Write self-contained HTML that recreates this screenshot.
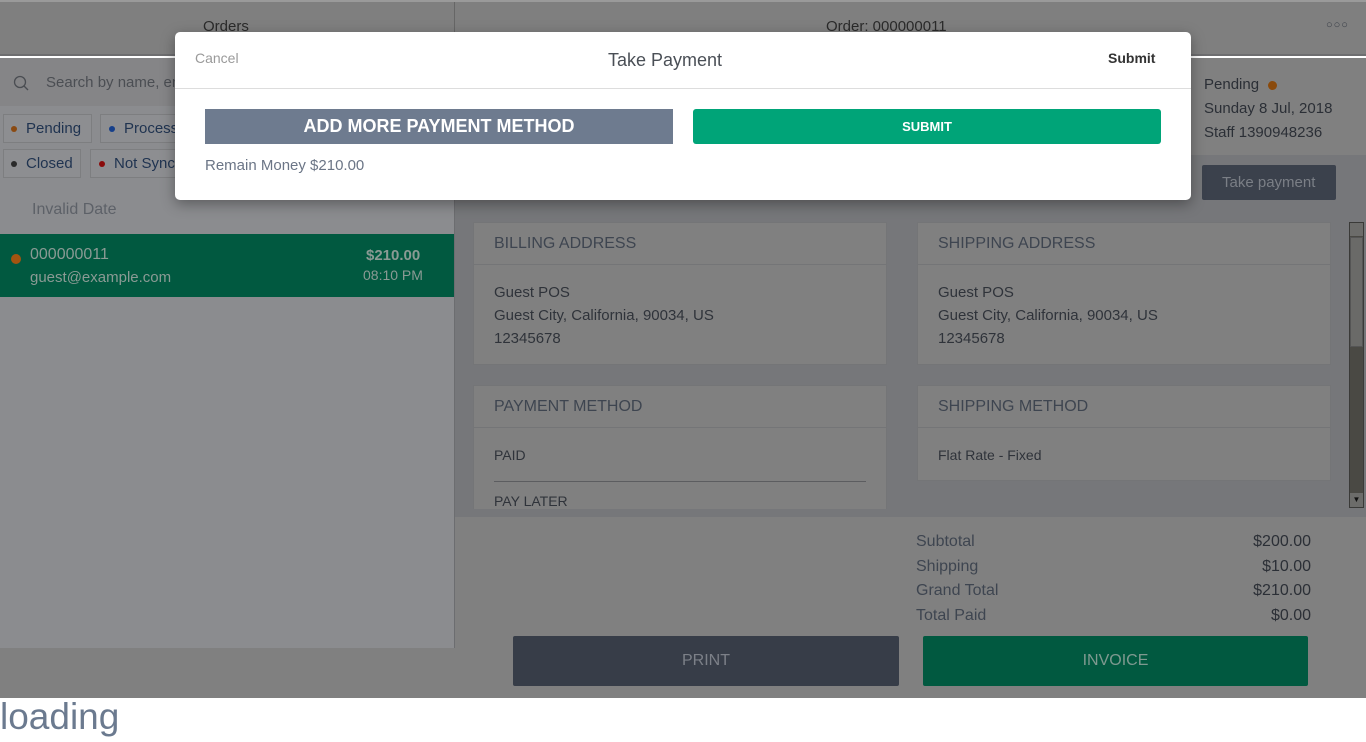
<!DOCTYPE html>
<html><head><meta charset="utf-8"><style>
*{box-sizing:border-box;margin:0;padding:0}
body{width:1366px;height:742px;position:relative;overflow:hidden;background:#fff;font-family:"Liberation Sans","DejaVu Sans",sans-serif}
.a{position:absolute}
.t{position:absolute;white-space:nowrap}
.card{position:absolute;background:#808080;border:1px solid #747577}
.card .h{height:42px;border-bottom:1px solid #747577;padding:12px 20px;font-size:16px;color:#3e4550}
.card .b{padding:16px 20px;font-size:15px;color:#2f333a;line-height:23px}
</style></head><body>
<div class="a" style="left:0;top:0;width:1366px;height:2px;background:#9a9a9a"></div>
<div class="a" style="left:0;top:2px;width:1366px;height:54px;background:#7f7f7f;border-bottom:2px solid #6e6e70"></div>
<div class="a" style="left:454px;top:2px;width:1px;height:54px;background:#666"></div>
<div class="t" style="left:203px;top:18px;font-size:15px;color:#2b2b2b">Orders</div>
<div class="t" style="left:826px;top:18px;font-size:15px;color:#2b2b2b">Order: 000000011</div>
<div class="t" style="left:1326px;top:19px;font-size:11px;color:#3a3f48;letter-spacing:1px">○○○</div>
<div class="a" style="left:0;top:58px;width:454px;height:48px;background:#858587"></div>
<svg class="a" style="left:13px;top:75px" width="18" height="18"><circle cx="7" cy="7" r="5.5" fill="none" stroke="#4a4d52" stroke-width="1.3"/><line x1="11" y1="11" x2="15" y2="15" stroke="#4a4d52" stroke-width="1.3"/></svg>
<div class="t" style="left:46px;top:74px;font-size:15px;color:#4b4e53">Search by name, em</div>
<div class="a" style="left:0;top:106px;width:454px;height:542px;background:#8b8c8f"></div>
<div class="a" style="left:3px;top:114px;width:89px;height:29px;border:1px solid #7d7e80;background:#8d8e91"></div>
<div class="a" style="left:11px;top:126px;width:6px;height:6px;border-radius:50%;background:#8a4a12"></div>
<div class="t" style="left:26px;top:120px;font-size:15px;color:#1f3350">Pending</div>
<div class="a" style="left:100px;top:114px;width:90px;height:29px;border:1px solid #7d7e80;background:#8d8e91"></div>
<div class="a" style="left:109px;top:126px;width:6px;height:6px;border-radius:50%;background:#163f8a"></div>
<div class="t" style="left:124px;top:120px;font-size:15px;color:#1f3350">Process</div>
<div class="a" style="left:3px;top:149px;width:78px;height:29px;border:1px solid #7d7e80;background:#8d8e91"></div>
<div class="a" style="left:11px;top:161px;width:6px;height:6px;border-radius:50%;background:#2a2a2a"></div>
<div class="t" style="left:26px;top:155px;font-size:15px;color:#1f3350">Closed</div>
<div class="a" style="left:90px;top:149px;width:100px;height:29px;border:1px solid #7d7e80;background:#8d8e91"></div>
<div class="a" style="left:99px;top:161px;width:6px;height:6px;border-radius:50%;background:#8a0a0a"></div>
<div class="t" style="left:114px;top:155px;font-size:15px;color:#1f3350">Not Sync</div>
<div class="t" style="left:32px;top:201px;font-size:16px;color:#5d6168">Invalid Date</div>
<div class="a" style="left:0;top:234px;width:454px;height:63px;background:#015940"></div>
<div class="a" style="left:11px;top:254px;width:10px;height:10px;border-radius:50%;background:#a35410"></div>
<div class="t" style="left:30px;top:246px;font-size:16px;color:#8a9a94">000000011</div>
<div class="t" style="left:30px;top:269px;font-size:15px;color:#8a9a94">guest@example.com</div>
<div class="t" style="left:366px;top:247px;font-size:15px;font-weight:bold;color:#8a9a94">$210.00</div>
<div class="t" style="left:363px;top:267px;font-size:14px;color:#8a9a94">08:10 PM</div>
<div class="a" style="left:454px;top:58px;width:1px;height:590px;background:#6c6d70"></div>
<div class="a" style="left:455px;top:58px;width:911px;height:97px;background:#808080"></div>
<div class="t" style="left:1204px;top:76px;font-size:15px;color:#2b2f36">Pending</div>
<div class="a" style="left:1268px;top:81px;width:9px;height:9px;border-radius:50%;background:#8a4a0c"></div>
<div class="t" style="left:1204px;top:100px;font-size:15px;color:#2b2f36">Sunday 8 Jul, 2018</div>
<div class="t" style="left:1204px;top:124px;font-size:15px;color:#2b2f36">Staff 1390948236</div>
<div class="a" style="left:455px;top:155px;width:911px;height:362px;background:#76777a"></div>
<div class="a" style="left:1202px;top:165px;width:134px;height:35px;background:#3b414c;border-radius:2px"></div>
<div class="t" style="left:1222px;top:174px;font-size:15px;color:#7b7f86">Take payment</div>
<div class="card" style="left:473px;top:222px;width:414px;height:143px"><div class="h">BILLING ADDRESS</div><div class="b">Guest POS<br>Guest City, California, 90034, US<br>12345678</div></div>
<div class="card" style="left:917px;top:222px;width:414px;height:143px"><div class="h">SHIPPING ADDRESS</div><div class="b">Guest POS<br>Guest City, California, 90034, US<br>12345678</div></div>
<div class="card" style="left:473px;top:385px;width:414px;height:124px;border-bottom:none"><div class="h">PAYMENT METHOD</div><div class="b" style="font-size:14px">PAID<div style="border-top:1px solid #5c5d60;margin:14px 0 8px"></div>PAY LATER</div></div>
<div class="card" style="left:917px;top:385px;width:414px;height:96px"><div class="h">SHIPPING METHOD</div><div class="b" style="font-size:14px">Flat Rate - Fixed</div></div>
<div class="a" style="left:1349px;top:222px;width:15px;height:286px;background:#4a4944;border:1px solid #3a3a38"></div>
<div class="a" style="left:1350px;top:223px;width:13px;height:13px;background:#6c6c6a"></div>
<div class="a" style="left:1350px;top:237px;width:13px;height:110px;background:#6a6a68;border:1px solid #555"></div>
<div class="a" style="left:1350px;top:493px;width:13px;height:14px;background:#6c6c6a;font-size:8px;text-align:center;line-height:14px;color:#111">▼</div>
<div class="a" style="left:455px;top:517px;width:911px;height:181px;background:#808080"></div>
<div class="a" style="left:0;top:648px;width:455px;height:50px;background:#808080"></div>
<div class="t" style="left:916px;top:530px;font-size:16px;color:#3e4550;line-height:24.7px">Subtotal<br>Shipping<br>Grand Total<br>Total Paid</div>
<div class="t" style="left:1200px;width:111px;text-align:right;top:530px;font-size:16px;color:#2b2f36;line-height:24.7px">$200.00<br>$10.00<br>$210.00<br>$0.00</div>
<div class="a" style="left:513px;top:636px;width:386px;height:50px;background:#373d48;border-radius:2px;text-align:center;line-height:50px;font-size:16px;color:#7c8088">PRINT</div>
<div class="a" style="left:923px;top:636px;width:385px;height:50px;background:#015940;border-radius:2px;text-align:center;line-height:50px;font-size:16px;color:#7f9990">INVOICE</div>
<div class="t" style="left:0;top:696px;font-size:37px;color:#6b7a8f">loading</div>
<div class="a" style="left:175px;top:32px;width:1016px;height:168px;background:#fff;border-radius:5px;box-shadow:0 4px 14px rgba(0,0,0,.35)">
<div class="t" style="left:20px;top:18px;font-size:14px;color:#9a9a9a">Cancel</div>
<div class="t" style="left:433px;top:18px;font-size:18px;color:#4a4f56">Take Payment</div>
<div class="t" style="left:933px;top:18px;font-size:14px;font-weight:bold;color:#333">Submit</div>
<div class="a" style="left:0;top:56px;width:1016px;height:1px;background:#ddd"></div>
<div class="a" style="left:30px;top:77px;width:468px;height:35px;background:#6e7b8f;color:#fff;font-size:18px;font-weight:bold;text-align:center;line-height:35px">ADD MORE PAYMENT METHOD</div>
<div class="a" style="left:518px;top:77px;width:468px;height:35px;background:#00a478;border-radius:3px;color:#fff;font-size:13px;font-weight:bold;text-align:center;line-height:35px">SUBMIT</div>
<div class="t" style="left:30px;top:125px;font-size:15px;color:#6b7586">Remain Money $210.00</div>
</div>
</body></html>
